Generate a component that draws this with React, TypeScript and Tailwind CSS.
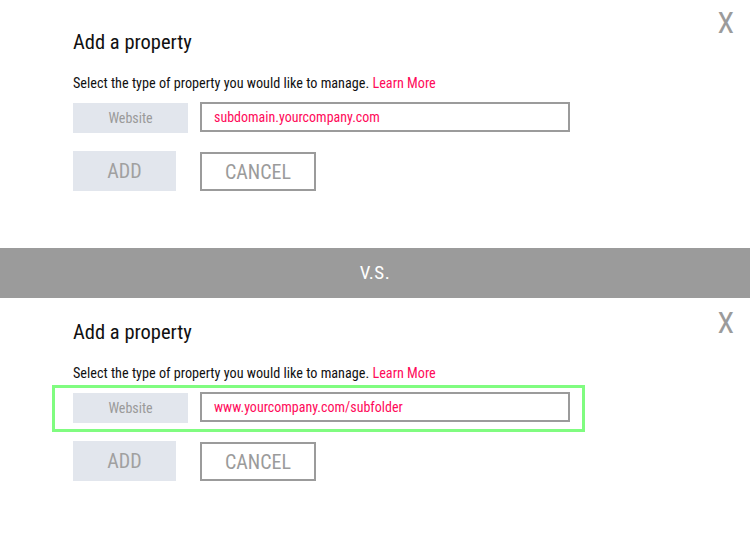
type PropertyFormProps = {
  url: string;
  highlight?: boolean;
};

function PropertyForm({ url, highlight }: PropertyFormProps) {
  return (
    <div className={"relative bg-white " + (highlight ? "h-[252px] pt-[21px]" : "h-[248px] pt-[29px]")}>
      <div
        className={
          "absolute right-[16px] text-[30px] leading-[36px] text-[#9b9b9b] " + (highlight ? "top-[7px]" : "top-[5px]")
        }
      >
        X
      </div>
      <div className="pl-[73px]">
        <h2 className="text-[20.5px] leading-[26px] text-[#111]">Add a property</h2>
        <p className="mt-[19px] text-[14.2px] leading-[18px] text-[#111]">
          Select the type of property you would like to manage.{" "}
          <span className="text-[#ff0a5a]">Learn More</span>
        </p>
        <div
          className={
            "-ml-[21px] mt-[3px] flex w-[533px] items-start gap-[12px] border-[3px] pb-[6px] pl-[18px] pt-[4px] " +
            (highlight ? "border-[#80fc80]" : "border-transparent")
          }
        >
          <div className="mt-px flex h-[30px] w-[115px] items-center justify-center bg-[#e2e6ed] text-[14px] text-[#9a9a9a]">
            Website
          </div>
          <div className="flex h-[30px] w-[370px] items-center border-2 border-[#9b9b9b] px-[12px] text-[14px] text-[#ff0a5a]">
            {url}
          </div>
        </div>
        <div className="mt-[9px] flex items-start gap-[24px]">
          <div className="flex h-[40px] w-[103px] items-center justify-center bg-[#e2e6ed] text-[20px] text-[#a0a0a0]">
            ADD
          </div>
          <div className="mt-px flex h-[39px] w-[116px] items-center justify-center border-2 border-[#9b9b9b] text-[20px] text-[#9b9b9b]">
            CANCEL
          </div>
        </div>
      </div>
    </div>
  );
}

export default function App() {
  return (
    <div className="h-[550px] w-[750px] overflow-hidden bg-white font-['Roboto_Condensed',sans-serif]">
      <PropertyForm url="subdomain.yourcompany.com" />
      <div className="flex h-[50px] items-center justify-center bg-[#9b9b9b] text-[19px] tracking-wide text-white">
        V.S.
      </div>
      <PropertyForm url="www.yourcompany.com/subfolder" highlight />
    </div>
  );
}
